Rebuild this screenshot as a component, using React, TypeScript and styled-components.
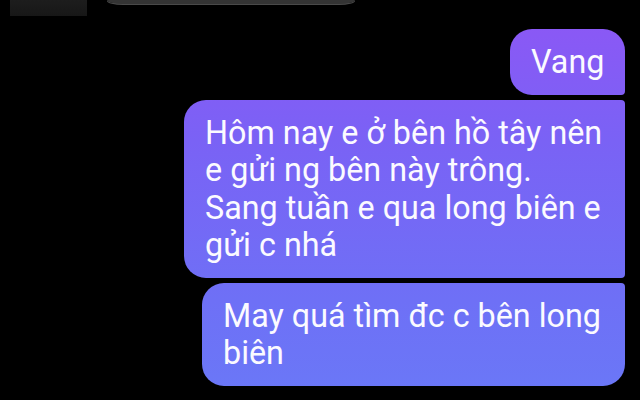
import React from "react";
import styled, { createGlobalStyle } from "styled-components";

const GlobalStyle = createGlobalStyle`
  html, body {
    margin: 0;
    padding: 0;
    background: #000;
  }
  body {
    font-family: Roboto, "Noto Sans", "Liberation Sans", sans-serif;
  }
`;

const Screen = styled.div`
  width: 640px;
  height: 400px;
  overflow: hidden;
  background: #000;
  display: flex;
  flex-direction: column;
`;

const TopStrip = styled.div`
  display: flex;
  align-items: flex-start;
  gap: 20px;
  padding-left: 10px;
  height: 16px;
`;

const AvatarStub = styled.div`
  width: 77px;
  height: 16px;
  background: linear-gradient(to bottom, #1d1d1d, #171717);
`;

const PrevBubbleEdge = styled.div`
  width: 248px;
  height: 4px;
  background: #343434;
  border-radius: 0 0 16px 16px / 0 0 4px 4px;
  box-shadow: 0 1px 0 #4a4a4a;
`;

const Thread = styled.div`
  display: flex;
  flex-direction: column;
  align-items: flex-end;
  gap: 5px;
  padding: 13px 15px 0 0;
`;

type Corner = "tail" | "mid" | "last";

const Bubble = styled.div<{ $w: number; $kind: Corner }>`
  box-sizing: border-box;
  width: ${(p) => p.$w}px;
  padding: 15px 8px 13px 21px;
  font-family: Roboto, "Noto Sans", "Liberation Sans", sans-serif;
  font-size: 32.3px;
  line-height: 37.5px;
  color: #fbfaff;
  background: linear-gradient(to bottom, #8e56f5 0px, #7a62f5 140px, #6e70f6 300px, #6a78f7 400px);
  background-attachment: fixed;
  border-radius: ${(p) =>
    p.$kind === "tail"
      ? "22px 22px 4px 22px"
      : p.$kind === "mid"
      ? "22px 4px 4px 22px"
      : "22px 4px 22px 22px"};
`;

export default function App() {
  return (
    <>
      <GlobalStyle />
      <Screen>
        <TopStrip>
          <AvatarStub />
          <PrevBubbleEdge />
        </TopStrip>
        <Thread>
          <Bubble $w={115} $kind="tail">Vang</Bubble>
          <Bubble $w={441} $kind="mid">
            Hôm nay e ở bên hồ tây nên e gửi ng bên này trông.
            <br />
            Sang tuần e qua long biên e gửi c nhá
          </Bubble>
          <Bubble $w={423} $kind="last">
            May quá tìm đc c bên long biên
          </Bubble>
        </Thread>
      </Screen>
    </>
  );
}
